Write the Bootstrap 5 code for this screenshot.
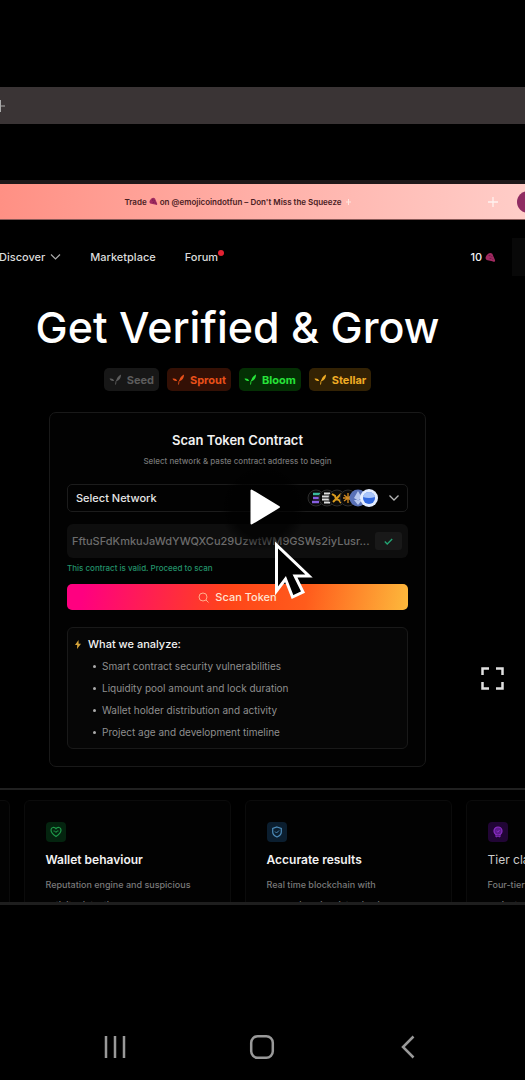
<!DOCTYPE html>
<html lang="en">
<head>
<meta charset="utf-8">
<meta name="viewport" content="width=device-width, initial-scale=1">
<title>Get Verified &amp; Grow</title>
<link href="https://cdn.jsdelivr.net/npm/bootstrap@5.3.0/dist/css/bootstrap.min.css" rel="stylesheet">
<style>
  body { background: #000; color: #f2f2f2; font-family: Inter, "Liberation Sans", sans-serif; font-size: 12px; line-height: 16px; min-height: 100vh; }
  button, input, select { font-family: inherit; }
  svg { display: block; flex: none; }
  .tab-strip { height: 37px; margin-top: 87px; background: #3a3435; color: #aaa; }
  .video-frame { margin-top: 56px; border-top: 4px solid #1d1819; border-bottom: 3px solid #1e1e1e; }
  .promo { height: 36px; background: linear-gradient(90deg, #ff9084, #ffb0a8 50%, #ffcdc8); color: #4a2023; font-size: 8px; font-weight: 600; border-bottom: 1px solid #8a5a58; }
  .promo-round { width: 22px; height: 22px; background: #8f2c62; margin-right: -14px; }
  .site-nav { height: 74px; font-size: 11px; font-weight: 500; }
  .site-nav a { color: #dcdcdc; text-decoration: none; }
  .nav-set { gap: 29px; margin-left: -1px; }
  .red-dot { width: 6px; height: 6px; background: #e32232; top: 1px; right: -6px; }
  .side-tile { width: 13px; height: 38px; background: #080808; }
  .page-center { padding-right: 50px; }
  .hero-title { font-size: 43px; line-height: 52px; font-weight: 500; color: #fff; margin: 7px 0 15px; white-space: nowrap; }
  .tier { height: 23px; border-radius: 5px; font-size: 11px; font-weight: 700; padding: 0 5px; gap: 5px; }
  .t-seed { background: #171717; color: #5c5c5c; }
  .t-sprout { background: #331005; color: #e8501a; }
  .t-bloom { background: #042f04; color: #27e43a; }
  .t-stellar { background: #332204; color: #efac25; }
  .scan-card { width: 377px; max-width: 100%; margin-top: 21px; padding: 17px; background: #020202; border: 1px solid #191919; border-radius: 7px; }
  .scan-card h2 { font-size: 13px; line-height: 20px; font-weight: 600; margin: 0; }
  .sub { font-size: 8px; font-weight: 500; color: #777; line-height: 12px; margin: 5px 0 17px; }
  .net-select { height: 28px; background: #020202; color: #e6e6e6; border: 1px solid #1c1c1c; border-radius: 5px; font-size: 11px; font-weight: 500; padding: 0 8px; appearance: none; }
  .net-icons { right: 8px; top: 4px; gap: 10px; pointer-events: none; }
  .addr { height: 34px; background: #0e0e0e; border-radius: 6px; padding: 0 6px 0 5px; margin-top: 12px; }
  .addr input { background: none; border: 0; color: #6c6c6c; font-size: 11px; font-weight: 500; padding: 0; min-width: 0; }
  .ok-btn { width: 27px; height: 18px; background: #191919; border: 0; border-radius: 3px; padding: 0; }
  .valid { font-size: 8px; font-weight: 500; color: #23936a; line-height: 12px; margin: 4px 0 10px; }
  .scan-btn { height: 26px; border: 0; border-radius: 5px; color: #ffe3d2; font-size: 11px; font-weight: 500; line-height: 16px; padding: 0; gap: 6px; background: linear-gradient(100deg, #ff0080 5%, #ff4518 48%, #ff5c1c 70%, #fdb93c); }
  .scan-btn:hover { color: #fff; }
  .analyze { margin-top: 17px; padding: 8px 7px 5px; border: 1px solid #191919; border-radius: 6px; background: #060606; }
  .analyze h3 { font-size: 11px; line-height: 16px; font-weight: 500; margin: 0; gap: 7px; }
  .analyze ul { font-size: 10px; line-height: 22px; color: #8f8f8f; margin: 3px 0 0; padding-left: 18px; list-style: none; }
  .analyze li { display: flex; align-items: center; gap: 6px; }
  .analyze li::before { content: ""; width: 3px; height: 3px; border-radius: 50%; background: #aaa; }
  .rule { height: 2px; background: #202020; margin-top: 21px; }
  .features { margin-top: 10px; height: 102px; gap: 14px; overflow: hidden; }
  .feature { width: 207px; height: 140px; flex: none; border: 1px solid #0b0b0b; border-radius: 6px; background: #020202; padding: 21px; }
  .feature h3 { font-size: 12px; line-height: 16px; font-weight: 600; margin: 10px 0 7px; }
  .feature p { font-size: 9px; font-weight: 500; line-height: 20px; color: #7a7a7a; margin: 0; }
  .feature .light { font-weight: 400; color: #ccc; white-space: nowrap; }
  .tile { width: 20px; height: 20px; border-radius: 4px; }
  .g { background: #04240f; color: #1f9a4a; } .b { background: #0b1e2f; color: #4d8cba; } .v { background: #210535; color: #8a2fc4; }
  .play { left: 50%; top: 323px; transform: translate(-50%, -50%); width: 86px; height: 86px; border: 0; padding: 0 0 0 30px; border-radius: 50%; background: radial-gradient(circle, #000a 50%, #0000 72%); }
  .pointer { left: 52%; top: 356px; pointer-events: none; }
  .full { right: 20px; top: 482px; border: 0; background: none; padding: 0; }
  .sys-nav { margin-top: 129px; padding: 0 2px 18px 0; }
  .sys-nav button { width: 28%; border: 0; background: none; padding: 0; }
</style>
</head>
<body class="overflow-x-hidden">
<svg width="0" height="0" class="position-absolute" aria-hidden="true">
  <symbol id="leaf" viewBox="0 0 14 12"><path d="M8 7.500C8 4.500 10 2 13 .5 13 4 11.500 7 8 7.500zM5.500 7.500C4.500 5 3 4.500 .5 5 1 7 3 8 5.500 7.500Z" fill="currentColor"/><path d="M7 11.500Q6.500 8 10.500 4" stroke="currentColor" fill="none"/></symbol>
  <symbol id="grape" viewBox="0 0 12 12"><path d="M1 5C3 1 6 0 8 2L11 9C11 11 10 11 8 10L3 9C1 9 0 7 1 5Z" fill="#a12a60"/><path d="M4 4h2M7 5h1M5 7h2M8 8h1" stroke="#671547"/></symbol>
</svg>

<div class="tab-strip d-flex align-items-center overflow-hidden"><svg width="5" height="12" viewBox="7 0 5 12"><path d="M7.500 0v12M7 6h5" stroke="#aaa"/></svg></div>

<main class="video-frame position-relative overflow-hidden">
  <div class="promo d-flex align-items-center position-relative">
    <div class="page-center flex-grow-1 d-flex align-items-center justify-content-center gap-1 text-nowrap">
      <div class="d-flex align-items-center"><span>Trade&nbsp;</span><svg width="9" height="9"><use href="#grape"/></svg><span>&nbsp;on @emojicoindotfun – Don't Miss the Squeeze</span></div>
      <svg width="5" height="6" viewBox="0 0 5 6"><path d="M2.500 0v6M0 3h5" stroke="#ffe6df"/></svg>
    </div>
    <div class="position-absolute end-0 d-flex align-items-center gap-3">
      <svg width="14" height="12" viewBox="0 0 14 12"><path d="M6 1v10M1 6h10" stroke="#fff2ef" stroke-width="1.300"/></svg>
      <div class="promo-round rounded-circle"></div>
    </div>
  </div>

  <nav class="site-nav d-flex align-items-center justify-content-between">
    <div class="nav-set d-flex align-items-center">
      <a href="#" class="d-flex align-items-center gap-1">Discover<svg width="12" height="8" viewBox="0 0 12 8"><path d="M2 1.500 6.500 6 11 1.500" fill="none" stroke="#aaa" stroke-width="1.200"/></svg></a>
      <a href="#">Marketplace</a>
      <a href="#" class="position-relative">Forum<span class="red-dot rounded-circle position-absolute"></span></a>
    </div>
    <div class="d-flex align-items-center gap-3">
      <div class="d-flex align-items-center">10&nbsp;<svg width="11" height="11"><use href="#grape"/></svg></div>
      <div class="side-tile"></div>
    </div>
  </nav>

  <div class="page-center d-flex flex-column align-items-center">
    <h1 class="hero-title">Get Verified &amp; Grow</h1>
    <div class="d-flex gap-2">
      <span class="tier t-seed d-flex align-items-center"><svg width="13" height="11"><use href="#leaf"/></svg>Seed</span>
      <span class="tier t-sprout d-flex align-items-center"><svg width="13" height="11"><use href="#leaf"/></svg>Sprout</span>
      <span class="tier t-bloom d-flex align-items-center"><svg width="13" height="11"><use href="#leaf"/></svg>Bloom</span>
      <span class="tier t-stellar d-flex align-items-center"><svg width="13" height="11"><use href="#leaf"/></svg>Stellar</span>
    </div>

    <section class="scan-card">
      <h2 class="text-center">Scan Token Contract</h2>
      <p class="sub text-center">Select network &amp; paste contract address to begin</p>
      <div class="position-relative">
        <select class="net-select w-100" aria-label="Network"><option>Select Network</option></select>
        <div class="net-icons position-absolute d-flex align-items-center">
          <svg width="74" height="20" viewBox="0 0 74 20">
            <circle cx="12" cy="10" r="8" fill="#0a0a0a" stroke="#2c2c2c"/>
            <path d="M9 10h7M8 14h7" stroke="#865ee0" stroke-width="2.500"/><path d="M9 6h7" stroke="#39b99e" stroke-width="2.500"/>
            <circle cx="23" cy="10" r="8" fill="#0a0a0a" stroke="#2c2c2c"/><path d="M20 5.500h6M18 8.500h9M18 11.500h9M20 14.500h6" stroke="#ddd" stroke-width="2"/>
            <circle cx="33" cy="10" r="8" fill="#0a0a0a" stroke="#2c2c2c"/><path d="M28 6l3 2 1 3 3 1 2 3M37 6l-3 3-3 3-2 2" stroke="#d99b1d" stroke-width="2" fill="none"/>
            <circle cx="44" cy="10" r="8" fill="#0a0a0a" stroke="#2c2c2c"/><path d="M44 5v10M40 7l8 6M48 7l-8 6M39 10h10" stroke="#d28a20" stroke-width="1.300"/>
            <circle cx="54" cy="10" r="8.500" fill="#5971b7"/><path d="M54 3l4 7-4 2.500-4-2.500zM50 12l4 5 4-5" fill="#b5c6ee"/>
            <circle cx="65" cy="10" r="9" fill="#e4edff"/><circle cx="65" cy="10" r="6" fill="#3268df"/><path d="M59 9q6 2 12 0-1-5-6-5t-6 5" fill="#a9c5fb"/>
          </svg>
          <svg width="12" height="8" viewBox="0 0 12 8"><path d="M1.500 1.500 6 6l4.500-4.500" fill="none" stroke="#b5b5b5" stroke-width="1.300"/></svg>
        </div>
      </div>
      <div class="addr d-flex align-items-center gap-1">
        <input type="text" class="flex-grow-1" aria-label="Contract address" value="FftuSFdKmkuJaWdYWQXCu29UzwtWM9GSWs2iyLusr...">
        <button class="ok-btn d-flex align-items-center justify-content-center" type="button" aria-label="Valid"><svg width="9" height="7" viewBox="0 0 9 7"><path d="M.8 3.500 3.200 6 8.200 1" fill="none" stroke="#24a574" stroke-width="1.300"/></svg></button>
      </div>
      <p class="valid">This contract is valid. Proceed to scan</p>
      <button type="button" class="btn scan-btn w-100 d-flex align-items-center justify-content-center"><svg width="11" height="11" viewBox="0 0 11 11"><circle cx="5" cy="5" r="4" fill="none" stroke="#ffad8a"/><path d="M8 8l2.500 2.500" stroke="#ffad8a"/></svg>Scan Token</button>
      <div class="analyze">
        <h3 class="d-flex align-items-center"><svg width="6" height="9" viewBox="0 0 6 9"><path d="M3.500 0 0 5h2.200L2 9l4-5.200H3.600z" fill="#d7a53a"/></svg>What we analyze:</h3>
        <ul>
          <li>Smart contract security vulnerabilities</li>
          <li>Liquidity pool amount and lock duration</li>
          <li>Wallet holder distribution and activity</li>
          <li>Project age and development timeline</li>
        </ul>
      </div>
    </section>
  </div>

  <div class="rule"></div>
  <div class="features page-center d-flex justify-content-center">
    <article class="feature"></article>
    <article class="feature">
      <div class="tile g d-flex align-items-center justify-content-center"><svg width="12" height="12" viewBox="0 0 12 12"><path d="M6 10.500C3 8.500 1 6.500 1 4c0-3 3.500-3.300 5-1.300C7.500.7 11 1 11 4c0 2.500-2 4.500-5 6.500z" fill="none" stroke="currentColor" stroke-width="1.200"/><path d="M3.500 5h1.200L6 6.500 7 5h1.500" fill="none" stroke="currentColor"/></svg></div>
      <h3>Wallet behaviour</h3>
      <p>Reputation engine and suspicious activity detection</p>
    </article>
    <article class="feature">
      <div class="tile b d-flex align-items-center justify-content-center"><svg width="12" height="12" viewBox="0 0 12 12"><path d="M6 1l4.300 1.500V6c0 2.500-2 4-4.300 5C3.700 10 1.700 8.500 1.700 6V2.500z" fill="none" stroke="currentColor" stroke-width="1.200"/><path d="M4 5.500 5.500 7 8 4.500" fill="none" stroke="currentColor"/></svg></div>
      <h3>Accurate results</h3>
      <p>Real time blockchain with<br>comprehensive data checks</p>
    </article>
    <article class="feature">
      <div class="tile v d-flex align-items-center justify-content-center"><svg width="12" height="12" viewBox="0 0 12 12"><circle cx="6" cy="5" r="4" fill="#5d1a8c" stroke="currentColor" stroke-width="1.200"/><path d="M4 8v3l2-1 2 1V8M4.500 5 6 6.200 7.500 4" fill="none" stroke="currentColor"/></svg></div>
      <h3 class="light">Tier classification</h3>
      <p>Four-tier ranking system for every project</p>
    </article>
  </div>

  <button type="button" class="play position-absolute" aria-label="Play"><svg width="30" height="36" viewBox="0 0 30 36"><path d="M1.500 1.500v33L29 18z" fill="#fff" stroke="#fff" stroke-width="2" stroke-linejoin="round"/></svg></button>
  <svg class="pointer position-absolute" width="42" height="62" viewBox="0 0 42 62"><path d="M3.500 5v46l9-12 7 18 10.500-5-8-16h14z" fill="#000" stroke="#fff" stroke-width="3"/></svg>
  <button type="button" class="full position-absolute" aria-label="Full screen"><svg width="25" height="25" viewBox="0 0 25 25"><path d="M2.500 9V2.500H9M16 2.500h6.500V9M22.500 16v6.500H16M9 22.500H2.500V16" fill="none" stroke="#e0e0e0" stroke-width="2.500"/></svg></button>
</main>

<footer class="sys-nav d-flex justify-content-center">
  <button type="button" aria-label="Recents" class="d-flex justify-content-center"><svg width="26" height="26" viewBox="0 0 26 26"><path d="M4 2v22M13 2v22M22 2v22" stroke="#999" stroke-width="2.500"/></svg></button>
  <button type="button" aria-label="Home" class="d-flex justify-content-center"><svg width="26" height="26" viewBox="0 0 26 26"><rect x="2.200" y="2.200" width="21.600" height="21.600" rx="6.500" fill="none" stroke="#999" stroke-width="2.500"/></svg></button>
  <button type="button" aria-label="Back" class="d-flex justify-content-center"><svg width="26" height="26" viewBox="0 0 26 26"><path d="M18.500 2.500 8 13l10.500 10.500" fill="none" stroke="#999" stroke-width="2.500"/></svg></button>
</footer>
<script src="https://cdn.jsdelivr.net/npm/bootstrap@5.3.0/dist/js/bootstrap.bundle.min.js"></script>
</body>
</html>
